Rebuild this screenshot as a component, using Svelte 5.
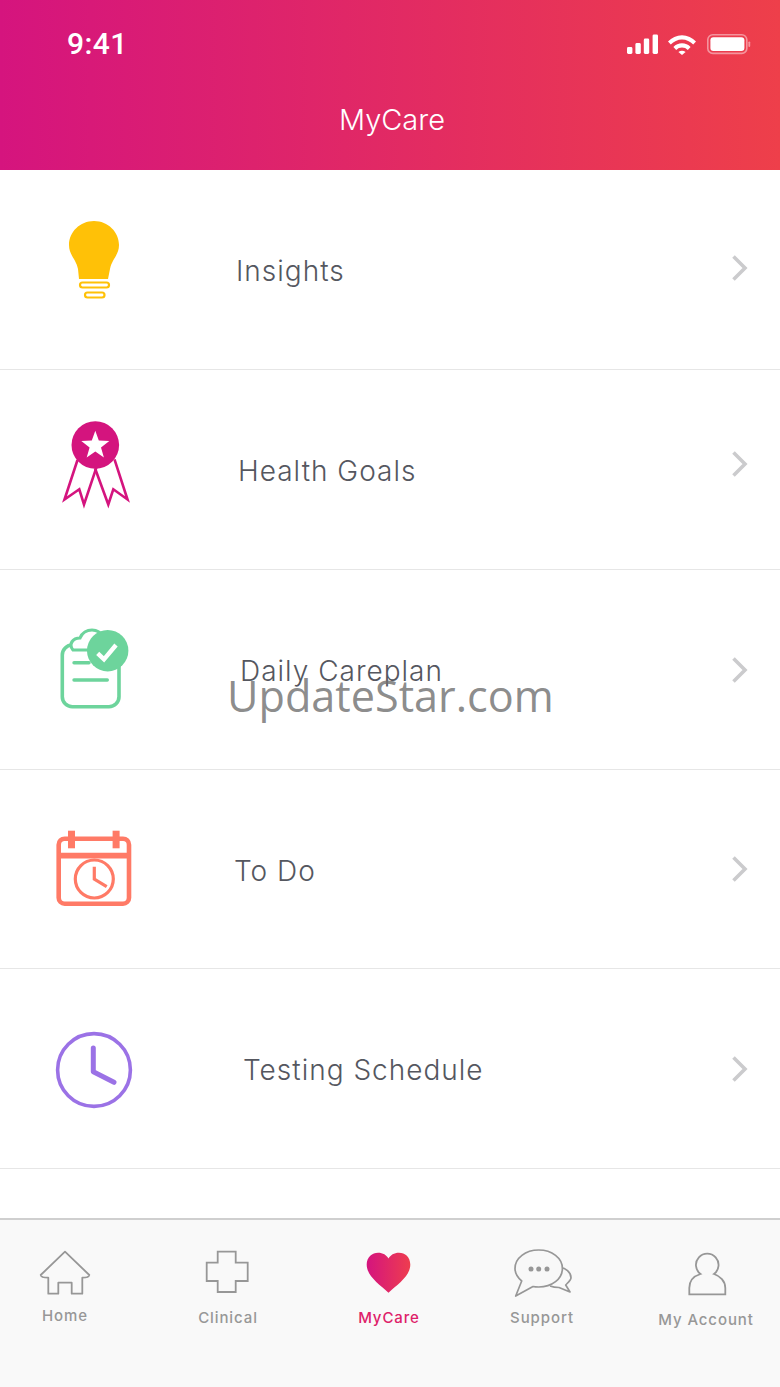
<script>
  // labels don't share a left edge in the design, so x is per row
  const rows = [
    { icon: 'bulb', label: 'Insights', gap: 97, height: 200, nudge: -2 },
    { icon: 'medal', label: 'Health Goals', gap: 99, height: 200, nudge: -6 },
    { icon: 'clipboard', label: 'Daily Careplan', gap: 101, height: 200, nudge: 0 },
    { icon: 'calendar', label: 'To Do', gap: 95, height: 199, nudge: 0 },
    { icon: 'clock', label: 'Testing Schedule', gap: 104, height: 200, nudge: 0 }
  ];

  const tabs = [
    { id: 'home', label: 'Home', width: 130, top: 7 },
    { id: 'clinical', label: 'Clinical', width: 196, top: 9 },
    { id: 'mycare', label: 'MyCare', width: 126, top: 9, active: true },
    { id: 'support', label: 'Support', width: 180, top: 9 },
    { id: 'account', label: 'My Account', width: 148, top: 11 }
  ];
</script>

<div class="screen">
  <header class="header">
    <div class="status">
      <span class="time">9:41</span>
      <svg class="status-icons" width="130" height="24" viewBox="0 0 130 24" aria-hidden="true">
        <rect x="0" y="13" width="5.4" height="7" rx="1.4" fill="#fff" />
        <rect x="8.4" y="9" width="5.4" height="11" rx="1.4" fill="#fff" />
        <rect x="16.8" y="4.6" width="5.4" height="15.4" rx="1.4" fill="#fff" />
        <rect x="25.6" y="0.4" width="5.4" height="19.6" rx="1.4" fill="#fff" />
        <path d="M41 7.5 A19 19 0 0 1 69 7.5 L66.2 10.6 A15 15 0 0 0 43.8 10.6 Z" fill="#fff" />
        <path d="M46.4 13 A12 12 0 0 1 63.6 13 L60.8 16 A8 8 0 0 0 49.2 16 Z" fill="#fff" />
        <path d="M51.4 18 A6 6 0 0 1 58.6 18 L55 21 Z" fill="#fff" />
        <rect x="80.8" y="0.8" width="39" height="18.6" rx="5" fill="none" stroke="#fff" stroke-opacity="0.45" stroke-width="1.6" />
        <rect x="83.4" y="3.2" width="34" height="13.8" rx="3" fill="#fff" />
        <rect x="121.4" y="7.4" width="1.8" height="5.6" rx="0.9" fill="#fff" fill-opacity="0.45" />
      </svg>
    </div>
    <h1 class="title">MyCare</h1>
  </header>

  <main class="list">
    {#each rows as row}
      <div class="row" style="height: {row.height}px">
        <svg class="row-icon" width="90" height="90" viewBox="0 0 90 90" aria-hidden="true">
          {#if row.icon === 'bulb'}
            <path d="M45 -4 C31 -4 20 7 20 20 C20 30 27 34 29 44 L30 54 H59 L61 44 C63 34 70 30 70 20 C70 7 59 -4 45 -4 Z" fill="#ffc107" />
            <rect x="31" y="57.5" width="29" height="5" rx="2.5" fill="none" stroke="#ffc107" stroke-width="2.2" />
            <rect x="36" y="67.5" width="19.5" height="5" rx="2.5" fill="none" stroke="#ffc107" stroke-width="2.2" />
          {:else if row.icon === 'medal'}
            <path d="M28.5 35 L15.5 74.5 L30.3 64.3 L35 79.5 L47.7 41.7" fill="none" stroke="#d4147e" stroke-width="2.6" />
            <path d="M46 43.3 L59.3 79.5 L64.3 64.3 L78.5 74.5 L65.5 34.3" fill="none" stroke="#d4147e" stroke-width="2.6" />
            <circle cx="46.3" cy="20" r="23.8" fill="#d4147e" />
            <path d="M46.3 5.8 L49.8 15.6 L60.3 16 L52 22.4 L54.9 32.4 L46.3 26.5 L37.7 32.4 L40.6 22.4 L32.3 16 L42.8 15.6 Z" fill="#fff" />
          {:else if row.icon === 'clipboard'}
            <rect x="13.3" y="20" width="56.7" height="61.7" rx="10" fill="#fff" stroke="#6dd49c" stroke-width="3.6" />
            <path d="M24 25 C19 19 24 13 31 13 C33 8 38 5 43 5 C48 5 52 8 54 12 L50 25 Z" fill="#fff" stroke="#6dd49c" stroke-width="3.2" />
            <path d="M25 37.7 H40 M25 55 H58.3" stroke="#6dd49c" stroke-width="3.4" stroke-linecap="round" fill="none" />
            <circle cx="58.7" cy="25.7" r="20.7" fill="#6dd49c" />
            <path d="M48.7 28.3 L55 34.3 L67 20" fill="none" stroke="#fff" stroke-width="4.4" />
          {:else if row.icon === 'calendar'}
            <rect x="9.7" y="14.7" width="70.3" height="65" rx="6" fill="none" stroke="#ff7a66" stroke-width="4.6" />
            <path d="M9.7 31.7 H80" stroke="#ff7a66" stroke-width="5.8" />
            <rect x="19" y="6.7" width="7" height="17.6" fill="#ff7a66" />
            <rect x="63.6" y="6.7" width="7" height="17.6" fill="#ff7a66" />
            <circle cx="45.3" cy="55" r="19" fill="none" stroke="#ff7a66" stroke-width="3.2" />
            <path d="M45.3 42.7 V55 L57.7 62.7" fill="none" stroke="#ff7a66" stroke-width="3.2" />
          {:else}
            <circle cx="45" cy="46" r="36.4" fill="none" stroke="#9b72e6" stroke-width="3.6" />
            <path d="M44.3 24 V47.7 L65 58.3" fill="none" stroke="#9b72e6" stroke-width="5" stroke-linecap="round" stroke-linejoin="round" />
          {/if}
        </svg>
        <span class="label" style="margin-left: {row.gap}px">{row.label}</span>
        <svg class="chevron" style="margin-top: {row.nudge * 2}px" width="18" height="28" viewBox="0 0 18 28" aria-hidden="true">
          <path d="M2.5 2.5 L14 14 L2.5 25.5" fill="none" stroke="#cbcbcd" stroke-width="3.6" />
        </svg>
      </div>
    {/each}
  </main>

  <nav class="tabbar">
    {#each tabs as tab}
      <div class="tab" class:active={tab.active} style="width: {tab.width}px">
        <svg width="60" height="50" viewBox="0 0 60 50" aria-hidden="true">
          {#if tab.id === 'home'}
            <path d="M30 2.7 L54.3 26 Q54 28.7 47.3 28.7 V44.7 H36.7 V33.7 H23.3 V44.7 H13.3 V28.7 Q6 28.7 5.7 26 Z" fill="none" stroke="#979797" stroke-width="1.8" stroke-linejoin="round" />
          {:else if tab.id === 'clinical'}
            <path d="M19.7 2.7 H37.7 V13.7 H49.7 V32 H37.7 V43 H19.7 V32 H8.7 V13.7 H19.7 Z" fill="none" stroke="#979797" stroke-width="1.8" />
          {:else if tab.id === 'mycare'}
            <defs>
              <linearGradient id="heart" x1="0" x2="1" y1="0" y2="0">
                <stop offset="0" stop-color="#d4147e" />
                <stop offset="1" stop-color="#ee3d4f" />
              </linearGradient>
            </defs>
            <path d="M29.5 43.7 C20 35 7.7 27 7.7 15.5 C7.7 8 13.5 3.7 19 3.7 C24 3.7 27.5 6 29.5 9.5 C31.5 6 35 3.7 40 3.7 C46 3.7 51.3 8 51.3 15.5 C51.3 27 39 35 29.5 43.7 Z" fill="url(#heart)" />
          {:else if tab.id === 'support'}
            <path d="M49 18.7 C53 19 59 23 59 28.7 C59 31 56 33.5 53.7 36 L58 43 L47 38.5 Q42 38.5 38 37" fill="none" stroke="#979797" stroke-width="1.7" stroke-linejoin="round" />
            <path d="M3.7 47 L9.7 32 C5 28 3 24 3 19.4 C3 9 13.5 1 26.7 1 C40 1 50.4 9 50.4 19.4 C50.4 30 40 38 26.7 38 Q23 38 21 37.5 Z" fill="#f8f8f8" stroke="#979797" stroke-width="1.7" stroke-linejoin="round" />
            <circle cx="19" cy="20" r="2.5" fill="#979797" />
            <circle cx="26.7" cy="20" r="2.5" fill="#979797" />
            <circle cx="35" cy="20" r="2.5" fill="#979797" />
          {:else}
            <path d="M13.3 45.3 H49.3 V39 C49.3 32 44 27 38 25 A11.3 11.3 0 1 0 24.5 25 C18 27 13.3 32 13.3 39 Z" fill="none" stroke="#979797" stroke-width="1.8" />
          {/if}
        </svg>
        <span class="tab-label" style="margin-top: {tab.top}px">{tab.label}</span>
      </div>
    {/each}
  </nav>

  <div class="watermark">UpdateStar.com</div>
</div>

<style>
  :global(body) {
    margin: 0;
  }

  .screen {
    position: relative;
    width: 780px;
    height: 1387px;
    display: flex;
    flex-direction: column;
    background: #fff;
    overflow: hidden;
    font-family: Inter, "Open Sans", sans-serif;
  }

  .header {
    height: 170px;
    box-sizing: border-box;
    flex: none;
    padding-top: 26px;
    background: linear-gradient(90deg, #d5147e 0%, #ee3f4a 100%);
    color: #fff;
  }

  .status {
    display: flex;
    justify-content: space-between;
    align-items: center;
    height: 34px;
    padding: 0 23px 0 67px;
  }

  .time {
    font-family: Roboto, "Liberation Sans", sans-serif;
    font-size: 30px;
    font-weight: 500;
    letter-spacing: 0.4px;
  }

  .status-icons {
    display: block;
    margin-top: 5px;
  }

  .title {
    margin: 43px 0 0;
    text-align: center;
    padding-left: 4px;
    font-size: 29px;
    font-weight: 300;
    line-height: 34px;
  }

  .list {
    flex: 1;
  }

  .row {
    display: flex;
    align-items: center;
    box-sizing: border-box;
    padding-left: 49px;
    padding-right: 31px;
    border-bottom: 1px solid #e6e6e6;
  }

  .row-icon {
    flex: none;
    overflow: visible;
  }

  .label {
    flex: 1;
    padding-top: 3px;
    font-size: 28px;
    font-weight: 300;
    color: #55575f;
    letter-spacing: 1px;
  }

  .chevron {
    flex: none;
  }

  .tabbar {
    display: flex;
    flex: none;
    height: 169px;
    box-sizing: border-box;
    border-top: 2px solid #cfcfcf;
    background: #f9f9f9;
    padding-top: 29px;
  }

  .tab {
    display: flex;
    flex-direction: column;
    align-items: center;
  }

  .tab svg {
    display: block;
    overflow: visible;
  }

  .tab-label {
    font-family: Inter, Roboto, sans-serif;
    font-size: 15px;
    font-weight: 500;
    letter-spacing: 0.9px;
    line-height: 20px;
    color: #979797;
  }

  .tab.active .tab-label {
    color: #de2169;
  }

  .watermark {
    position: absolute;
    left: 227px;
    top: 666px;
    font-family: "Open Sans", sans-serif;
    font-size: 43.2px;
    line-height: 60px;
    color: rgba(110, 110, 110, 0.8);
    white-space: nowrap;
  }
</style>
